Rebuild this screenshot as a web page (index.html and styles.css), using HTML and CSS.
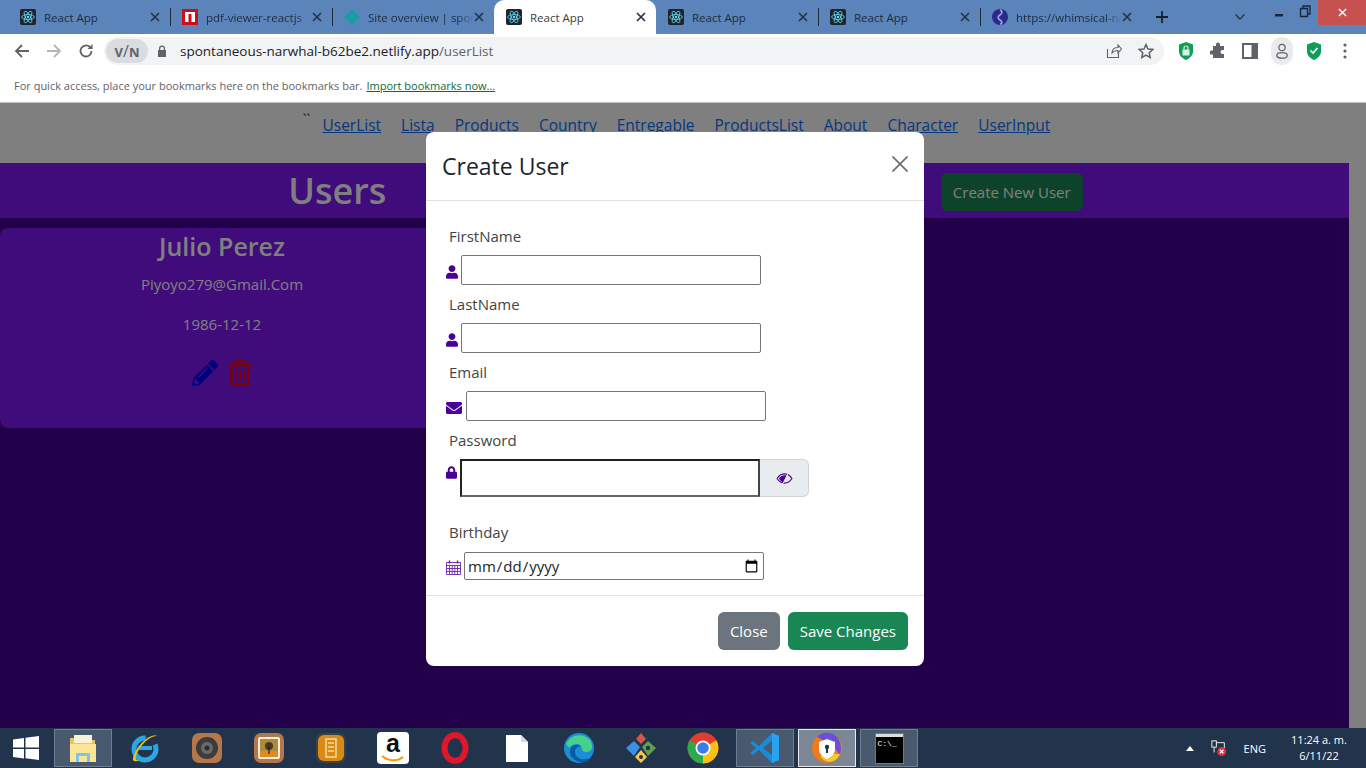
FILE: index.html
```html
<!DOCTYPE html>
<html lang="en">
<head>
    <meta charset="UTF-8">
    <title>React App</title>
    <link rel="stylesheet" href="styles.css">
</head>
<body>
    <svg class="defs" width="0" height="0">
        <symbol id="react" viewBox="0 0 16 16">
            <rect width="16" height="16" rx="2" fill="#20232a"/>
            <g fill="none" stroke="#61dafb" stroke-width=".8">
                <ellipse cx="8" cy="8" rx="6.4" ry="2.5"/>
                <ellipse cx="8" cy="8" rx="6.4" ry="2.5" transform="rotate(60 8 8)"/>
                <ellipse cx="8" cy="8" rx="6.4" ry="2.5" transform="rotate(120 8 8)"/>
            </g>
            <circle cx="8" cy="8" r="1.3" fill="#61dafb"/>
        </symbol>
        <symbol id="tab-x" viewBox="0 0 10 10">
            <path d="M1 1l8 8M9 1l-8 8" stroke="#263446" stroke-width="1.7" fill="none"/>
        </symbol>
        <symbol id="user" viewBox="0 0 448 512">
            <path d="M224 256c70.7 0 128-57.3 128-128S294.7 0 224 0 96 57.3 96 128s57.3 128 128 128zm89.6 32h-16.7c-22.2 10.2-46.9 16-72.9 16s-50.6-5.8-72.9-16h-16.7C60.2 288 0 348.2 0 422.4V464c0 26.5 21.5 48 48 48h352c26.5 0 48-21.5 48-48v-41.6c0-74.2-60.2-134.4-134.4-134.4z"/>
        </symbol>
    </svg>

    <div class="tabstrip">
        <div class="tab"><svg class="favicon"><use href="#react"/></svg><span class="tab-title">React App</span><svg class="tab-close"><use href="#tab-x"/></svg></div>
        <div class="tab">
            <svg class="favicon" viewBox="0 0 16 16"><rect width="16" height="16" fill="#cc0f16"/><rect x="3" y="3" width="10" height="10" fill="#fff"/><rect x="6.5" y="5" width="3" height="8" fill="#cc0f16"/></svg>
            <span class="tab-title fade">pdf-viewer-reactjs</span><svg class="tab-close"><use href="#tab-x"/></svg>
        </div>
        <div class="tab">
            <svg class="favicon" viewBox="0 0 16 16"><path d="M8 0l8 8-8 8-8-8z" fill="#1c9aa6"/></svg>
            <span class="tab-title fade">Site overview | spontaneous</span><svg class="tab-close"><use href="#tab-x"/></svg>
        </div>
        <div class="tab active"><svg class="favicon"><use href="#react"/></svg><span class="tab-title">React App</span><svg class="tab-close"><use href="#tab-x"/></svg></div>
        <div class="tab"><svg class="favicon"><use href="#react"/></svg><span class="tab-title">React App</span><svg class="tab-close"><use href="#tab-x"/></svg></div>
        <div class="tab"><svg class="favicon"><use href="#react"/></svg><span class="tab-title">React App</span><svg class="tab-close"><use href="#tab-x"/></svg></div>
        <div class="tab">
            <svg class="favicon" viewBox="0 0 16 16"><circle cx="8" cy="8" r="8" fill="#2a2a8c"/><path d="M8 1c3 1 2 4 0 5S5 9 8 11s2 4 0 4" stroke="#9fa6e0" stroke-width="1.6" fill="none"/></svg>
            <span class="tab-title fade">https://whimsical-narwhal</span><svg class="tab-close"><use href="#tab-x"/></svg>
        </div>
        <svg class="new-tab" viewBox="0 0 12 12"><path d="M6 0v12M0 6h12" stroke="#17202c" stroke-width="1.8"/></svg>
        <svg class="tab-search" viewBox="0 0 10 6"><path d="M.5.5L5 5 9.500.5" stroke="#263446" stroke-width="1.4" fill="none"/></svg>
        <div class="win-controls">
            <svg class="win-btn" viewBox="0 0 26 25"><rect x="9" y="14" width="8" height="2.500" fill="#1b2533"/></svg>
            <svg class="win-btn" viewBox="0 0 26 25"><path d="M8.500 8.500h7v8h-7zM11 8.500V6h7v8h-2.500" fill="none" stroke="#1b2533" stroke-width="1.300"/></svg>
            <div class="win-close"><svg viewBox="0 0 10 10"><path d="M1 1l8 8M9 1l-8 8" stroke="#fff" stroke-width="1.500"/></svg></div>
        </div>
    </div>

    <div class="toolbar">
        <svg class="nav-icon" viewBox="0 0 16 16"><path d="M15 8H2M8 2L2 8l6 6" stroke="#5f6368" stroke-width="1.800" fill="none"/></svg>
        <svg class="nav-icon" viewBox="0 0 16 16"><path d="M1 8h13M8 2l6 6-6 6" stroke="#b4b6b9" stroke-width="1.800" fill="none"/></svg>
        <svg class="nav-icon" viewBox="0 0 16 16"><path d="M13.500 8a5.500 5.500 0 1 1-1.700-4" stroke="#5f6368" stroke-width="1.800" fill="none"/><path d="M14.500 1v5h-5z" fill="#5f6368"/></svg>
        <div class="omnibox">
            <div class="vpn">V<span class="vpn-p">/</span>N</div>
            <svg class="lock-small" viewBox="0 0 10 12"><path d="M2 5V3.500a3 3 0 0 1 6 0V5h1v7H1V5zm1.300 0h3.400V3.500a1.700 1.700 0 0 0-3.400 0z" fill="#5f6368"/></svg>
            <span class="url">spontaneous-narwhal-b62be2.netlify.app<span class="url-path">/userList</span></span>
            <svg class="omni-icon" viewBox="0 0 16 16"><path d="M1.500 6v8.500h11V10M6 10c0-4 3-5.500 6-5.500V2l3.500 4-3.500 4V7.500C9.500 7.500 7.500 8 6 10z" fill="none" stroke="#5f6368" stroke-width="1.100"/></svg>
            <svg class="omni-icon" viewBox="0 0 16 16"><path d="M8 1.500l2 4.500 4.800.5-3.600 3.200 1 4.800L8 12.100l-4.200 2.400 1-4.800L1.200 6.500 6 6z" fill="none" stroke="#5f6368" stroke-width="1.500"/></svg>
        </div>
        <div class="ext-icons">
            <svg class="ext" viewBox="0 0 16 18"><path d="M8 0l7 2.500v7C15 14 11 16.500 8 18c-3-1.500-7-4-7-8.500v-7z" fill="#0f9d58"/><rect x="4.500" y="7.500" width="7" height="6" fill="#d9f2e5"/><path d="M6 7.500V6a2 2 0 0 1 4 0v1.500" fill="none" stroke="#d9f2e5" stroke-width="1.200"/></svg>
            <svg class="ext" viewBox="0 0 16 16"><path d="M6 1.500a2 2 0 0 1 4 0V3h4v4h-1.500a2 2 0 0 0 0 4H14v4H3v-3.500H1.500a2 2 0 0 1 0-4H3V3h3z" fill="#5f6368"/></svg>
            <svg class="ext" viewBox="0 0 16 16"><path d="M1 1h14v14H1z" fill="none" stroke="#5f6368" stroke-width="2"/><rect x="9.500" y="1" width="5.500" height="14" fill="#5f6368"/></svg>
            <div class="profile"><svg viewBox="0 0 16 18"><circle cx="8" cy="5" r="3.600" fill="none" stroke="#5f6368" stroke-width="1.400"/><ellipse cx="8" cy="14" rx="6" ry="3.200" fill="none" stroke="#5f6368" stroke-width="1.400"/></svg></div>
            <svg class="ext" viewBox="0 0 16 18"><path d="M8 0l7 2.500v7C15 14 11 16.500 8 18c-3-1.500-7-4-7-8.500v-7z" fill="#0f9d58"/><path d="M4.500 8.500L7 11l4.500-5" fill="none" stroke="#fff" stroke-width="1.700"/></svg>
            <svg class="ext kebab" viewBox="0 0 4 16"><circle cx="2" cy="2" r="1.600" fill="#5f6368"/><circle cx="2" cy="8" r="1.600" fill="#5f6368"/><circle cx="2" cy="14" r="1.600" fill="#5f6368"/></svg>
        </div>
    </div>

    <div class="bookmarks">
        For quick access, place your bookmarks here on the bookmarks bar.
        <a class="import-link">Import bookmarks now...</a>
    </div>

    <div class="viewport">
        <div class="page">
            <nav class="site-nav">
                <span class="ticks">``</span>
                <a>UserList</a><a>Lista</a><a>Products</a><a>Country</a><a>Entregable</a><a>ProductsList</a><a>About</a><a>Character</a><a>UserInput</a>
            </nav>
            <main class="users">
                <div class="users-head">
                    <h1>Users</h1>
                    <div class="users-action"><button class="btn btn-green">Create New User</button></div>
                </div>
                <div class="user-card">
                    <h2>Julio Perez</h2>
                    <p>Piyoyo279@Gmail.Com</p>
                    <p>1986-12-12</p>
                    <div class="card-actions">
                        <svg class="icon-edit" viewBox="0 0 512 512"><path d="M497.900 142.100l-46.100 46.100c-4.700 4.700-12.300 4.700-17 0l-111-111c-4.700-4.700-4.700-12.300 0-17l46.100-46.100c18.700-18.700 49.100-18.700 67.900 0l60.100 60.100c18.800 18.700 18.800 49.100 0 67.900zM284.200 99.800L21.600 362.400.4 483.900c-2.900 16.400 11.400 30.600 27.800 27.800l121.500-21.300 262.600-262.600c4.700-4.700 4.700-12.300 0-17l-111-111c-4.800-4.700-12.400-4.700-17.100 0zM124.100 339.900c-5.500-5.500-5.500-14.300 0-19.800l154-154c5.500-5.500 14.300-5.500 19.800 0s5.500 14.300 0 19.800l-154 154c-5.500 5.500-14.300 5.500-19.800 0zM88 424h48v36.300l-64.500 11.300-31.100-31.100L51.700 376H88v48z"/></svg>
                        <svg class="icon-trash" viewBox="0 0 24 26"><path d="M1 5h22M7.500 5V3a2 2 0 0 1 2-2h5a2 2 0 0 1 2 2v2M3.500 5v18a2 2 0 0 0 2 2h13a2 2 0 0 0 2-2V5" fill="none" stroke-width="2.400"/><path d="M8 9v12M12 9v12M16 9v12" fill="none" stroke-width="1.800"/></svg>
                    </div>
                </div>
            </main>
        </div>
        <div class="scrollbar"></div>

        <div class="backdrop"></div>
        <div class="modal">
            <div class="modal-header">
                <h3>Create User</h3>
                <svg class="modal-close" viewBox="0 0 16 16"><path d="M.5.5l15 15M15.500.5l-15 15" stroke="#6f6f6f" stroke-width="1.800"/></svg>
            </div>
            <form class="modal-body">
                <label class="field-label">FirstName</label>
                <div class="field-row">
                    <svg class="field-icon icon-user"><use href="#user"/></svg>
                    <input class="field-input" type="text">
                </div>
                <label class="field-label">LastName</label>
                <div class="field-row">
                    <svg class="field-icon icon-user"><use href="#user"/></svg>
                    <input class="field-input" type="text">
                </div>
                <label class="field-label">Email</label>
                <div class="field-row">
                    <svg class="field-icon icon-mail" viewBox="0 0 512 512"><path d="M502.300 190.800c3.900-3.100 9.700-.2 9.700 4.700V400c0 26.500-21.500 48-48 48H48c-26.500 0-48-21.500-48-48V195.600c0-5 5.700-7.800 9.700-4.700 22.400 17.400 52.100 39.500 154.100 113.600 21.100 15.400 56.700 47.800 92.200 47.600 35.700.3 72-32.800 92.300-47.600 102-74.100 131.600-96.300 154-113.700zM256 320c23.200.4 56.600-29.200 73.400-41.400 132.700-96.300 142.800-104.700 173.400-128.700 5.800-4.500 9.200-11.500 9.200-18.900v-19c0-26.500-21.500-48-48-48H48C21.500 64 0 85.500 0 112v19c0 7.400 3.400 14.300 9.200 18.900 30.600 23.900 40.700 32.400 173.400 128.700 16.800 12.200 50.200 41.800 73.400 41.400z"/></svg>
                    <input class="field-input" type="text">
                </div>
                <label class="field-label">Password</label>
                <div class="field-row password-row">
                    <svg class="field-icon icon-lock" viewBox="0 0 448 512"><path d="M400 224h-24v-72C376 68.200 307.800 0 224 0S72 68.200 72 152v72H48c-26.500 0-48 21.500-48 48v192c0 26.500 21.500 48 48 48h352c26.500 0 48-21.500 48-48V272c0-26.500-21.500-48-48-48zm-104 0H152v-72c0-39.700 32.300-72 72-72s72 32.300 72 72v72z"/></svg>
                    <input class="field-input focused" type="password">
                    <button class="eye-btn" type="button">
                        <svg viewBox="0 0 18 14"><path d="M1 7c2-3.200 5-5 8-5s6 1.800 8 5c-2 3.200-5 5-8 5S3 10.200 1 7z" fill="none" stroke="#4a0099" stroke-width="1.200"/><path d="M3 7c1.500-2.300 3.700-3.600 6-3.600.8 0 1.600.1 2.300.4L8 11.400C6 11 4.300 9.400 3 7z" fill="#4a0099"/><path d="M13 1L7 13" stroke="#e9ecef" stroke-width="1"/></svg>
                    </button>
                </div>
                <label class="field-label birthday-label">Birthday</label>
                <div class="field-row">
                    <svg class="field-icon icon-cal" viewBox="0 0 15 15"><path d="M.5 2.500h14v12H.5zM.5 5.500h14M.5 8.500h14M.5 11.500h14M3.500 5.500v9M6.200 5.500v9M8.800 5.500v9M11.500 5.500v9" fill="none" stroke="#6a22b0" stroke-width=".9"/><path d="M3.500.5v3M11.500.5v3" stroke="#6a22b0" stroke-width="1.500"/></svg>
                    <input class="date-input" type="date">
                </div>
            </form>
            <div class="modal-footer">
                <button class="btn btn-gray">Close</button>
                <button class="btn btn-green">Save Changes</button>
            </div>
        </div>
    </div>

    <div class="taskbar">
        <div class="start">
            <svg viewBox="0 0 26 24"><path d="M0 3.500L11 2v9.500H0zM12.500 1.800L26 0v11.500H12.500zM0 13h11v9.500L0 21zM12.500 13H26v11l-13.500-1.800z" fill="#fff"/></svg>
        </div>
        <div class="task-item open">
            <svg viewBox="0 0 32 32"><path d="M3 6h10l2 2h13v22H3z" fill="#e8c55f"/><rect x="7" y="3" width="18" height="8" fill="#f7f2d8"/><rect x="3" y="12" width="26" height="18" fill="#fbe596"/><path d="M9 30v-9h14v9h-3v-6h-8v6z" fill="#7cc6ea"/></svg>
        </div>
        <div class="task-item">
            <svg viewBox="0 0 32 32"><path d="M8 16c3-8 10-12 17-11-4-1-9 0-12 3C9 12 7 18 8 22" fill="#2aa7e8"/><circle cx="16" cy="17" r="11" fill="none" stroke="#2aa7e8" stroke-width="5" stroke-dasharray="52 12"/><path d="M10 16h13" stroke="#2aa7e8" stroke-width="4"/><path d="M28 4C22 1 8 12 4 26c-1 4 3 4 7 2C6 29 6 26 8 21 12 12 22 3 28 4z" fill="#f2c30f"/></svg>
        </div>
        <div class="task-item">
            <svg viewBox="0 0 32 32"><rect x="1" y="1" width="30" height="30" rx="7" fill="#b5764a"/><circle cx="16" cy="16" r="11" fill="#3c3c3c"/><circle cx="16" cy="16" r="6" fill="#6a6a6a"/><circle cx="16" cy="16" r="2.500" fill="#2b2b2b"/></svg>
        </div>
        <div class="task-item">
            <svg viewBox="0 0 32 32"><rect x="1" y="1" width="30" height="30" rx="7" fill="#b5764a"/><rect x="5" y="5" width="22" height="22" rx="2" fill="#f5efe0"/><rect x="7" y="7" width="18" height="18" fill="#b08a3c"/><rect x="7" y="19" width="18" height="6" fill="#e08a20"/><circle cx="16" cy="14" r="4" fill="#4a3a20"/><path d="M16 14v8" stroke="#2a2010" stroke-width="1.200"/></svg>
        </div>
        <div class="task-item">
            <svg viewBox="0 0 32 32"><rect x="1" y="1" width="30" height="30" rx="7" fill="#3c3f44"/><rect x="3" y="3" width="26" height="26" rx="6" fill="#d98a14"/><path d="M11 7h10v18H11z" fill="none" stroke="#f6dc9f" stroke-width="1.500"/><path d="M13 11h6M13 15h6M13 19h6" stroke="#f6dc9f" stroke-width="1.500"/></svg>
        </div>
        <div class="task-item">
            <div class="amazon"><span class="amazon-a">a</span><svg viewBox="0 0 24 8"><path d="M1 1c6 5 15 6 21 1" fill="none" stroke="#f90" stroke-width="2"/></svg></div>
        </div>
        <div class="task-item">
            <svg viewBox="0 0 32 32"><ellipse cx="16" cy="16" rx="10.500" ry="13" fill="none" stroke="#e0162b" stroke-width="6"/></svg>
        </div>
        <div class="task-item">
            <svg viewBox="0 0 32 32"><path d="M5 3h15l7 7v20H5z" fill="#fff"/><path d="M20 3l7 7h-7z" fill="#d8d8d8"/></svg>
        </div>
        <div class="task-item">
            <svg viewBox="0 0 32 32"><circle cx="16" cy="16" r="15" fill="#1b8fd6"/><path d="M3 12C7 3 19 0 26 7c4 4 4 10 1 12-3 2-8 1-8-2 0-5-8-7-12-2-1 1-3-1-4-3z" fill="#46d08a"/><path d="M12 20c0-4 3-6 6-6-5-3-11 0-11 6 0 6 7 11 14 10 3 0 6-2 7-4-7 3-16 1-16-6z" fill="#0c59a4"/></svg>
        </div>
        <div class="task-item">
            <svg viewBox="0 0 32 32"><path d="M16 12l5-5-5-6-5 6z" fill="#d8544a"/><path d="M17 15l6-6 8 7-8 8z" fill="#5fa04e"/><path d="M15 15L9 9l-8 7 8 8z" fill="#3d8fe0"/><path d="M16 18l6 7-6 6-6-6z" fill="#f2c84b"/><circle cx="23" cy="16" r="2.200" fill="#22344c"/><circle cx="16" cy="25" r="2" fill="#22344c"/></svg>
        </div>
        <div class="task-item">
            <svg viewBox="0 0 32 32"><circle cx="16" cy="16" r="15.500" fill="#e33b2e"/><path d="M16 16L29.400 8.300A15.500 15.500 0 0 1 16 31.500z" fill="#fbc116"/><path d="M16 16v15.500A15.500 15.500 0 0 1 2.600 8.300z" fill="#2da94f"/><circle cx="16" cy="16" r="7.500" fill="#fff"/><circle cx="16" cy="16" r="5.800" fill="#3b7de8"/></svg>
        </div>
        <div class="task-item open">
            <svg viewBox="0 0 32 32"><path d="M23 1L10 14 4 9 1 11l6 5-6 5 3 2 6-5 13 13 7-3V4z" fill="#1c8ad6"/><path d="M23 9v14l-9-7z" fill="#4a5a70"/><path d="M23 1l7 3v24l-7 3z" fill="#2aa3ee"/></svg>
        </div>
        <div class="task-item open current">
            <svg viewBox="0 0 32 32"><circle cx="16" cy="16" r="15" fill="#f07a1c"/><path d="M6 5c6-6 15-5 20 0 4 5 5 12 3 18-4-6-10-12-23-18z" fill="#6c4ed8"/><path d="M9 24c7-2 14-2 20-2-4 9-14 11-20 2z" fill="#f3cc2a"/><path d="M16 7l8 3v7c0 5-4 8-8 10-4-2-8-5-8-10v-7z" fill="#fff"/><circle cx="16" cy="15" r="2.200" fill="#22344c"/><path d="M16 15v6" stroke="#22344c" stroke-width="2"/></svg>
        </div>
        <div class="task-item open">
            <div class="cmd"><div class="cmd-bar"></div><span class="cmd-text">C:\_</span></div>
        </div>
        <div class="tray">
            <svg class="tray-up" viewBox="0 0 8 5"><path d="M4 0l4 5H0z" fill="#fff"/></svg>
            <svg class="tray-net" viewBox="0 0 18 18"><rect x="1" y="1" width="5" height="7" fill="none" stroke="#fff"/><path d="M3.500 8v6M6 3h9v6" stroke="#fff" fill="none"/><circle cx="12" cy="13" r="5" fill="#e0303a"/><path d="M10 11l4 4M14 11l-4 4" stroke="#fff" stroke-width="1.300"/></svg>
            <span class="tray-lang">ENG</span>
            <div class="clock"><span>11:24 a. m.</span><span>6/11/22</span></div>
        </div>
    </div>
</body>
</html>
```

FILE: styles.css
```css
* { margin: 0; padding: 0; box-sizing: border-box; }
html, body { height: 100%; overflow: hidden; }
body {
    display: flex;
    flex-direction: column;
    font-family: "Open Sans", "Noto Sans", sans-serif;
    font-size: 15px;
    background: #fff;
    color: #212529;
}
.defs { position: absolute; }

/* browser chrome */
.tabstrip {
    display: flex;
    align-items: center;
    height: 34px;
    padding-left: 8px;
    background: #5a84ba;
    flex-shrink: 0;
}
.tab {
    position: relative;
    display: flex;
    align-items: center;
    width: 162px;
    height: 34px;
    padding: 0 10px 0 12px;
    font-size: 11.5px;
    color: #1e2b3c;
}
.tab + .tab::before {
    content: "";
    position: absolute;
    left: 0;
    top: 8px;
    height: 18px;
    width: 1px;
    background: #1e2b3c;
}
.tab.active { background: #fff; border-radius: 10px 10px 0 0; color: #3c4043; }
.tab.active::before, .tab.active + .tab::before { display: none; }
.favicon { width: 16px; height: 16px; flex-shrink: 0; }
.tab-title {
    flex: 1;
    margin-left: 8px;
    white-space: nowrap;
    overflow: hidden;
}
.tab-title.fade {
    -webkit-mask-image: linear-gradient(to right, #000 84%, transparent);
    mask-image: linear-gradient(to right, #000 84%, transparent);
}
.tab-close { width: 10px; height: 10px; flex-shrink: 0; margin-right: 0; }
.new-tab { width: 12px; height: 12px; margin-left: 14px; }
.tab-search { width: 10px; height: 6px; margin-left: 67px; }
.win-controls {
    display: flex;
    align-items: flex-start;
    align-self: flex-start;
    margin-left: auto;
}
.win-btn { width: 26px; height: 25px; }
.win-close {
    display: flex;
    align-items: center;
    justify-content: center;
    width: 48px;
    height: 25px;
    background: #c75050;
}
.win-close svg { width: 9px; height: 9px; }

.toolbar {
    display: flex;
    align-items: center;
    height: 34px;
    padding: 0 12px 0 14px;
    flex-shrink: 0;
}
.nav-icon { width: 16px; height: 16px; margin-right: 16px; }
.omnibox {
    display: flex;
    align-items: center;
    width: 1060px;
    height: 28px;
    margin-left: -6px;
    padding: 0 10px 0 2px;
    background: #f1f3f4;
    border-radius: 14px;
}
.vpn {
    width: 42px;
    height: 24px;
    line-height: 24px;
    text-align: center;
    background: #dadce0;
    border-radius: 12px;
    font-size: 13px;
    font-weight: 700;
    color: #5f6368;
}
.vpn-p { font-weight: 400; font-size: 16px; }
.lock-small { width: 10px; height: 12px; margin-left: 9px; }
.url {
    flex: 1;
    margin-left: 13px;
    font-size: 13.5px;
    color: #202124;
}
.url-path { color: #5f6368; }
.omni-icon { width: 16px; height: 16px; margin-left: 16px; }
.ext-icons { display: flex; align-items: center; margin-left: 14px; }
.ext { width: 16px; height: 18px; margin-right: 16px; }
.kebab { width: 4px; height: 16px; margin: 0 0 0 5px; }
.profile {
    display: flex;
    align-items: center;
    justify-content: center;
    width: 22px;
    height: 28px;
    margin: 0 13px 0 -3px;
    background: #e8eaed;
    border-radius: 11px;
}
.profile svg { width: 14px; height: 16px; }

.bookmarks {
    display: flex;
    align-items: center;
    gap: 4px;
    height: 35px;
    padding: 0 14px;
    font-size: 11px;
    color: #5f6368;
    border-bottom: 1px solid #c6c6c6;
    flex-shrink: 0;
}
.import-link { color: #0b6b3a; text-decoration: underline; }

/* the page under the modal */
.viewport {
    position: relative;
    display: flex;
    flex: 1;
    min-height: 0;
    overflow: hidden;
}
.page { display: flex; flex-direction: column; flex: 1; background: #fff; }
.scrollbar { width: 17px; background: #fff; }
.site-nav {
    display: flex;
    justify-content: center;
    gap: 20px;
    height: 60px;
    padding: 11px 0 0 4px;
    font-size: 15.500px;
}
.site-nav a { color: #0d6efd; text-decoration: underline; }
.ticks { font-size: 14px; margin-right: -8px; margin-top: -4px; color: #333; }
.users { flex: 1; background: #440094; }
.users-head {
    display: grid;
    grid-template-columns: 1fr 1fr;
    align-items: center;
    height: 55px;
    background: #8016f4;
    color: #fff;
}
.users-head h1 { text-align: center; font-size: 36px; font-weight: 600; line-height: 54px; }
.users-action { display: flex; justify-content: center; padding-top: 3px; }
.user-card {
    width: 444px;
    height: 200px;
    margin-top: 10px;
    padding-top: 2px;
    background: #8016f4;
    border-radius: 8px;
    color: #fff;
    text-align: center;
}
.user-card h2 { font-size: 25px; font-weight: 600; line-height: 32px; }
.user-card p { font-size: 15px; line-height: 24px; margin-top: 16px; }
.user-card h2 + p { margin-top: 10px; }
.card-actions {
    display: flex;
    justify-content: center;
    gap: 10px;
    margin-top: 24px;
}
.icon-edit { width: 26px; height: 26px; fill: #0000ff; }
.icon-trash { width: 24px; height: 26px; stroke: #ff0000; }

.backdrop { position: absolute; inset: 0; background: rgba(0, 0, 0, .5); }

/* modal */
.modal {
    position: absolute;
    left: 426px;
    top: 29px;
    width: 498px;
    height: 534px;
    display: flex;
    flex-direction: column;
    background: #fff;
    border-radius: 8px;
}
.modal-header {
    display: flex;
    align-items: center;
    justify-content: space-between;
    height: 69px;
    padding: 0 16px;
    border-bottom: 1px solid #dee2e6;
    flex-shrink: 0;
}
.modal-header h3 { font-size: 23px; font-weight: 500; }
.modal-close { width: 16px; height: 16px; margin-right: 0; margin-top: -4px; }
.modal-body { flex: 1; padding: 23px 20px 0; }
.field-label {
    display: block;
    height: 24px;
    line-height: 24px;
    margin-left: 3px;
    font-size: 15px;
    color: #444;
}
.field-row {
    display: flex;
    align-items: center;
    height: 30px;
    margin: 7px 0;
}
.field-icon { flex-shrink: 0; fill: #4a0099; margin-top: 3px; }
.icon-user { width: 12px; height: 14px; margin-right: 3px; }
.icon-mail { width: 16px; height: 16px; margin-right: 4px; }
.icon-lock { width: 11px; height: 13px; margin: -12px 3px 0 0; }
.icon-cal { width: 15px; height: 15px; margin-right: 3px; fill: none; }
.field-input {
    width: 300px;
    height: 30px;
    border: 1px solid #767676;
    border-radius: 2px;
    background: #fff;
}
.password-row { height: 38px; }
.field-input.focused {
    height: 38px;
    border: 2px solid #222;
    border-bottom-color: #666;
    border-right-color: #444;
    border-radius: 0;
}
.eye-btn {
    display: flex;
    align-items: center;
    justify-content: center;
    width: 49px;
    height: 38px;
    background: #e9ecef;
    border: 1px solid #ced4da;
    border-left: 0;
    border-radius: 0 6px 6px 0;
}
.eye-btn svg { width: 17px; height: 13px; }
.birthday-label { margin-top: 23px; }
.date-input {
    width: 300px;
    height: 28px;
    padding: 0 2px;
    border: 1px solid #767676;
    border-radius: 2px;
    font-family: "Open Sans", sans-serif;
    font-size: 15px;
    color: #212529;
}
.modal-footer {
    display: flex;
    justify-content: flex-end;
    align-items: center;
    gap: 8px;
    height: 71px;
    padding: 0 16px;
    border-top: 1px solid #dee2e6;
    flex-shrink: 0;
}
.btn {
    height: 38px;
    padding: 0 12px;
    border: 0;
    border-radius: 6px;
    color: #fff;
    font-family: inherit;
    font-size: 15px;
}
.btn-gray { background: #6c757d; }
.btn-green { background: #198754; }

/* windows taskbar */
.taskbar {
    display: flex;
    align-items: center;
    height: 40px;
    background: #22344c;
    flex-shrink: 0;
}
.start { display: flex; justify-content: center; width: 52px; }
.start svg { width: 26px; height: 24px; }
.task-item {
    display: flex;
    align-items: center;
    justify-content: center;
    width: 62px;
    height: 38px;
}
.task-item svg { width: 32px; height: 32px; }
.task-item.open {
    width: 58px;
    margin: 0 2px;
    background: #4a5a6e;
    border: 1px solid #6f7d8e;
}
.task-item.current { background: #7b8794; border-color: #e6e9ec; }
.amazon {
    width: 32px;
    height: 32px;
    background: #fff;
    border-radius: 4px;
    text-align: center;
    line-height: 22px;
}
.amazon-a { display: block; height: 23px; font-family: "Liberation Sans", sans-serif; font-size: 25px; font-weight: 700; color: #111; }
.task-item .amazon svg { display: block; width: 24px; height: 8px; margin: 0 auto; }
.cmd { width: 29px; height: 31px; background: #000; border: 1px solid #777; }
.cmd-bar { height: 3px; background: #ddd; }
.cmd-text { display: block; font-family: "Liberation Mono", monospace; font-size: 8px; line-height: 14px; color: #fff; padding-left: 2px; }
.tray {
    display: flex;
    align-items: center;
    margin-left: auto;
    color: #fff;
    font-size: 11px;
}
.tray-up { width: 8px; height: 5px; margin-right: 17px; }
.tray-net { width: 16px; height: 18px; margin-right: 17px; }
.tray-lang { margin-right: 18px; }
.clock {
    display: flex;
    flex-direction: column;
    align-items: center;
    width: 70px;
    margin-right: 12px;
    line-height: 16px;
}
```
